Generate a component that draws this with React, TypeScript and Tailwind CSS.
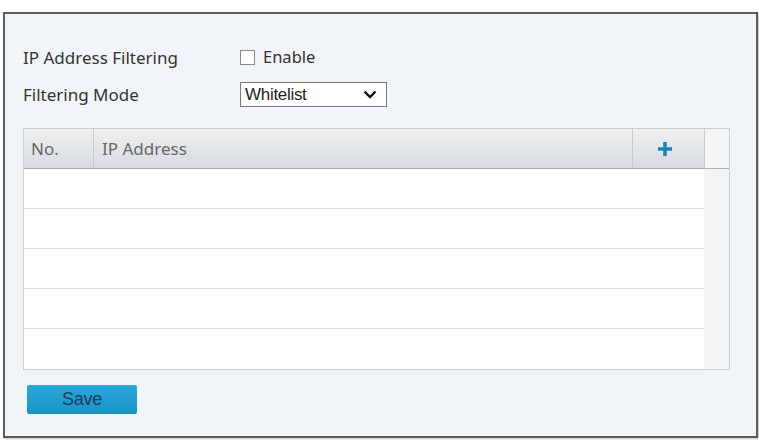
import React from "react";

const rows = [1, 2, 3, 4, 5];

function PlusIcon() {
  return (
    <svg width="14" height="14" viewBox="0 0 14 14">
      <path d="M5.2 0h3.6v5.2H14v3.6H8.8V14H5.2V8.8H0V5.2h5.2z" fill="#1b86b3" />
    </svg>
  );
}

export default function App() {
  return (
    <div className="w-[759px] h-[440px] bg-white pt-[12px] pl-[3px] font-['Noto_Sans',sans-serif]">
      <div className="w-[755px] h-[426px] border-2 border-[#5c5c5c] bg-[#f2f5f7] pl-[18px] pt-[31px] shadow-[1px_1px_2px_rgba(0,0,0,0.25)]">
        {/* settings */}
        <div className="flex flex-col gap-[12px]">
          <div className="flex items-center h-[25px]">
            <span className="w-[217px] text-[17px] text-[#333]">IP Address Filtering</span>
            <label className="flex items-center gap-[8px]">
              <span className="w-[15px] h-[15px] border border-[#8a8a8a] bg-white" />
              <span className="text-[16.5px] text-[#333]">Enable</span>
            </label>
          </div>
          <div className="flex items-center h-[25px]">
            <span className="w-[217px] text-[17px] text-[#333]">Filtering Mode</span>
            <div className="w-[147px] h-[25px] border border-[#7a7a7a] bg-white flex items-center justify-between pl-[4px] pr-[9px]">
              <span className="font-['Liberation_Sans',sans-serif] text-[17px] text-[#222] tracking-[-0.3px]">Whitelist</span>
              <svg width="14" height="9" viewBox="0 0 14 9">
                <path d="M1.5 1.5L7 7l5.5-5.5" stroke="#111" strokeWidth="2.4" fill="none" />
              </svg>
            </div>
          </div>
        </div>

        {/* table */}
        <div className="mt-[21px] w-[707px] border border-[#c9cdd0] flex">
          <div className="w-[680px]">
            <div className="flex h-[40px] bg-gradient-to-b from-[#eef0f1] to-[#d8dcdf] border-b border-[#a6abae] text-[17px] text-[#666]">
              <div className="w-[70px] border-r border-[#c6cacd] flex items-center pl-[7px]">No.</div>
              <div className="flex-1 border-r border-[#c6cacd] flex items-center pl-[8px]">IP Address</div>
              <div className="w-[71px] flex items-center justify-center pr-[8px]">
                <PlusIcon />
              </div>
            </div>
            {rows.map((r) => (
              <div key={r} className={`h-[40px] bg-white ${r < 5 ? "border-b border-[#dcdfe1]" : ""}`} />
            ))}
          </div>
          <div className="flex-1 bg-[#f3f5f7]">
            <div className="h-[40px] border-l border-b border-l-[#c6cacd] border-b-[#a6abae] bg-[#f3f5f7]" />
          </div>
        </div>

        {/* save */}
        <button className="mt-[15px] ml-[4px] w-[110px] h-[29px] rounded-[2px] bg-gradient-to-b from-[#2aa8dc] to-[#1893c6] font-['Liberation_Sans',sans-serif] text-[18px] text-[#173a5c] tracking-[-0.3px]">
          Save
        </button>
      </div>
    </div>
  );
}
